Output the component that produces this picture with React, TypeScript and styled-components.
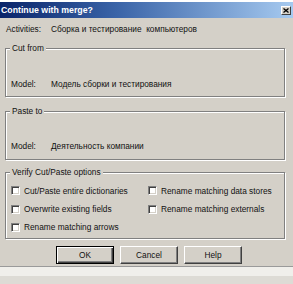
import React from "react";
import styled, { createGlobalStyle } from "styled-components";

const Global = createGlobalStyle`
  html, body { margin: 0; padding: 0; background: #dddbd5; }
  body { font-family: "Liberation Sans", Arial, sans-serif; }
`;

const Screen = styled.div`
  width: 293px;
  height: 284px;
  overflow: hidden;
  display: flex;
  flex-direction: column;
  background: #dddbd5;
`;

const TopStrip = styled.div`
  height: 2px;
  background: #ffffff;
  flex: none;
`;

const TitleBar = styled.div`
  height: 16px;
  flex: none;
  display: flex;
  align-items: center;
  justify-content: space-between;
  padding: 0 2px 0 1px;
  background: linear-gradient(to right, #0a246a 0%, #3a64a8 40%, #a6caf0 100%);
`;

const Title = styled.span`
  color: #ffffff;
  font-weight: bold;
  font-size: 8.75px;
  line-height: 16px;
  white-space: nowrap;
`;

const CloseButton = styled.div`
  width: 10px;
  height: 9px;
  box-sizing: border-box;
  background: #d4d0c8;
  border-top: 1px solid #ffffff;
  border-left: 1px solid #ffffff;
  border-right: 1px solid #404040;
  border-bottom: 1px solid #404040;
  display: flex;
  align-items: center;
  justify-content: center;
`;

const Body = styled.div`
  flex: none;
  height: 249px;
  box-sizing: border-box;
  background: #d4d0c8;
  padding-top: 5px;
  display: flex;
  flex-direction: column;
  border-bottom: 1px solid #9a9a9a;
`;

const Row = styled.div<{ $indent: number }>`
  display: flex;
  align-items: center;
  height: 12px;
  padding-left: ${(p) => p.$indent}px;
  font-size: 8.3px;
  color: #111;
  white-space: pre;
`;

const Label = styled.span`
  width: 40px;
  flex: none;
`;

const Group = styled.div<{ $h: number; $top: number; $pt: number }>`
  position: relative;
  box-sizing: border-box;
  margin: ${(p) => p.$top}px 0 0 5px;
  width: 280px;
  height: ${(p) => p.$h}px;
  border: 1px solid #808080;
  box-shadow: inset 1px 1px 0 #ffffff, 1px 1px 0 #ffffff;
  padding: ${(p) => p.$pt}px 5px 0 5px;
  flex: none;
`;

const Legend = styled.span`
  position: absolute;
  top: -7px;
  left: 4px;
  padding: 0 2px;
  background: #d4d0c8;
  font-size: 8.3px;
  line-height: 12px;
  color: #111;
  white-space: nowrap;
`;

const GroupRow = styled(Row)`
  padding-left: 0;
`;

const Options = styled.div`
  display: grid;
  grid-template-columns: 137px 1fr;
  grid-template-rows: 19px 18px 18px;
`;

const Option = styled.label`
  display: flex;
  align-items: center;
  gap: 4px;
  font-size: 8.3px;
  color: #111;
  white-space: nowrap;
`;

const Box = styled.span`
  width: 9px;
  height: 9px;
  box-sizing: border-box;
  flex: none;
  background: #ffffff;
  border-top: 1px solid #808080;
  border-left: 1px solid #808080;
  border-right: 1px solid #ffffff;
  border-bottom: 1px solid #ffffff;
  box-shadow: inset 1px 1px 0 #404040, inset -1px -1px 0 #d4d0c8;
`;

const Buttons = styled.div`
  display: flex;
  gap: 6px;
  margin-top: 7px;
  padding-left: 56px;
`;

const Button = styled.div<{ $default?: boolean }>`
  width: 58px;
  height: 18px;
  box-sizing: border-box;
  display: flex;
  align-items: center;
  justify-content: center;
  font-size: 8.3px;
  color: #111;
  background: #d4d0c8;
  border-top: 1px solid ${(p) => (p.$default ? "#000" : "#ffffff")};
  border-left: 1px solid ${(p) => (p.$default ? "#000" : "#ffffff")};
  border-right: 1px solid ${(p) => (p.$default ? "#000" : "#404040")};
  border-bottom: 1px solid ${(p) => (p.$default ? "#000" : "#404040")};
  box-shadow: ${(p) =>
    p.$default
      ? "inset 1px 1px 0 #ffffff, inset -1px -1px 0 #404040, inset -2px -2px 0 #808080"
      : "inset -1px -1px 0 #808080"};
`;

const LightStrip = styled.div`
  height: 9px;
  flex: none;
  background: #f0efeb;
`;

const options = [
  "Cut/Paste entire dictionaries",
  "Rename matching data stores",
  "Overwrite existing fields",
  "Rename matching externals",
  "Rename matching arrows",
];

export default function App() {
  return (
    <>
      <Global />
      <Screen>
        <TopStrip />
        <TitleBar>
          <Title>Continue with merge?</Title>
          <CloseButton>
            <svg width="6" height="5" viewBox="0 0 6 5">
              <path d="M0.5 0.5 L5.5 4.5 M5.5 0.5 L0.5 4.5" stroke="#000" strokeWidth="1.3" />
            </svg>
          </CloseButton>
        </TitleBar>
        <Body>
          <Row $indent={6}>
            <Label style={{ width: 45 }}>Activities:</Label>
            <span>Сборка и тестирование  компьютеров</span>
          </Row>
          <Group $h={49} $top={13} $pt={29}>
            <Legend>Cut from</Legend>
            <GroupRow $indent={0}>
              <Label>Model:</Label>
              <span>Модель сборки и тестирования</span>
            </GroupRow>
          </Group>
          <Group $h={49} $top={14} $pt={28}>
            <Legend>Paste to</Legend>
            <GroupRow $indent={0}>
              <Label>Model:</Label>
              <span>Деятельность компании</span>
            </GroupRow>
          </Group>
          <Group $h={67} $top={12} $pt={8}>
            <Legend>Verify Cut/Paste options</Legend>
            <Options>
              {options.map((o) => (
                <Option key={o}>
                  <Box />
                  {o}
                </Option>
              ))}
            </Options>
          </Group>
          <Buttons>
            <Button $default>OK</Button>
            <Button>Cancel</Button>
            <Button>Help</Button>
          </Buttons>
        </Body>
        <LightStrip />
      </Screen>
    </>
  );
}
